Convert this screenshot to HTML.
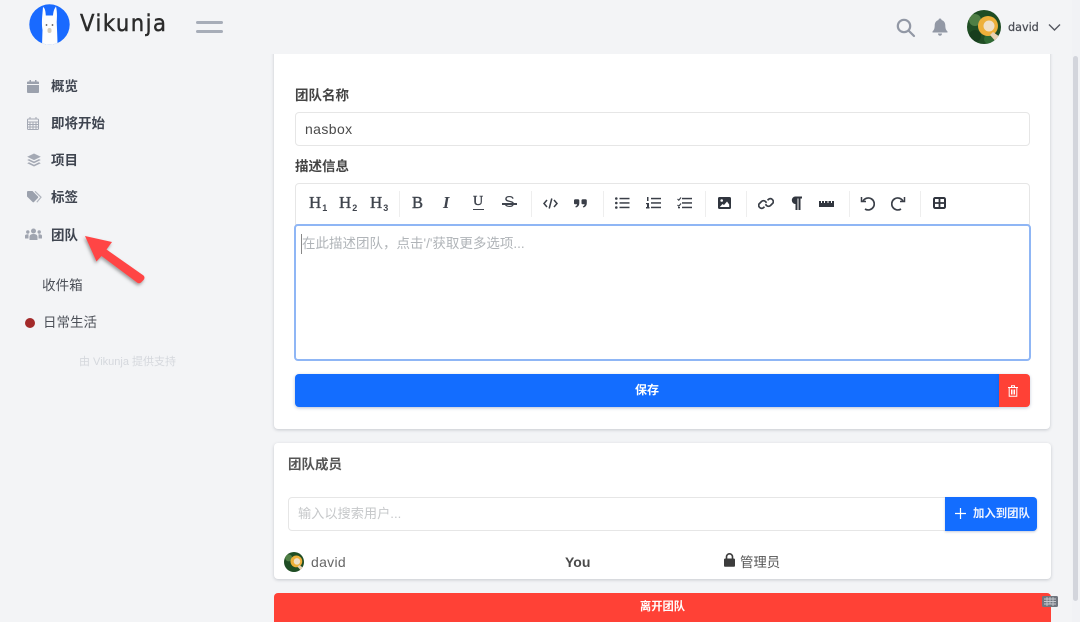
<!DOCTYPE html>
<html lang="zh"><head><meta charset="utf-8"><title>Vikunja</title>
<style>
*{box-sizing:border-box}
html,body{margin:0;padding:0;width:1080px;height:622px;overflow:hidden;background:#f3f4f6;font-family:"Liberation Sans","Noto Sans CJK SC",sans-serif;color:#4a4a4a}
#w{position:absolute;left:0;top:0;width:1080px;height:622px;overflow:hidden;filter:blur(.35px)}
.a{position:absolute;white-space:nowrap}
.card{position:absolute;background:#fff;border-radius:4px;box-shadow:0 1px 3px rgba(40,50,70,.22)}
.nav{position:absolute;left:51px;font-size:13.5px;font-weight:700;color:#3f4550;line-height:20px}
.lbl{position:absolute;left:295px;font-size:13.5px;font-weight:700;color:#444;line-height:20px}
.box{position:absolute;background:#fff;border:1px solid #e6e6e6;border-radius:4px}
.sep{position:absolute;top:191px;width:1px;height:26px;background:#eeeeee}
.h{position:absolute;top:193px;font:400 17px/20px "Liberation Serif",serif;color:#3f444d;-webkit-text-stroke:.35px #3f444d}
.h sub{font:700 9px "Liberation Sans",sans-serif;margin-left:1px;vertical-align:-3px;-webkit-text-stroke:0}
.t{position:absolute;font-family:"Liberation Serif",serif;color:#3f444d}
</style></head><body><div id="w">

<!-- sidebar icons -->
<svg class="a" style="left:27px;top:80px" width="12" height="13" viewBox="0 0 12 13" fill="#9ba1ad"><path d="M0 5H12V12a1 1 0 0 1-1 1H1a1 1 0 0 1-1-1Z M0 4V2.500a1 1 0 0 1 1-1H2.500V0H4V1.500H8V0H9.500V1.500H11a1 1 0 0 1 1 1V4Z"/></svg>
<div class="nav" style="top:77px">概览</div>
<svg class="a" style="left:27px;top:117px" width="12" height="13" viewBox="0 0 12 13" fill="none" stroke="#a4a9b4" stroke-width="1"><rect x=".5" y="2" width="11" height="10.500" rx="1"/><path d="M0 5H12M3 0V2M9 0V2M3 5V12M6 5V12M9 5V12M0 7.500H12M0 10H12"/></svg>
<div class="nav" style="top:114px">即将开始</div>
<svg class="a" style="left:27px;top:153px" width="14" height="14" viewBox="0 0 14 14" fill="#a4a9b4"><path d="M7 0.500 L13.800 3.800 L7 7.100 L0.200 3.800Z"/><path d="M2 6.100 L7 8.500 L12 6.100 L13.800 7 L7 10.300 L0.200 7Z"/><path d="M2 9.300 L7 11.700 L12 9.300 L13.800 10.200 L7 13.500 L0.200 10.200Z"/></svg>
<div class="nav" style="top:151px">项目</div>
<svg class="a" style="left:27px;top:191px" width="15" height="12" viewBox="0 0 15 12"><path d="M0 1 a1 1 0 0 1 1-1 H5.500 L11 5.500 a1 1 0 0 1 0 1.400 L7 11 a1 1 0 0 1-1.400 0 L0 5.500Z" fill="#9ba1ad"/><path d="M8 0.300 L14 6.200 L9.800 11.200" fill="none" stroke="#b0b5be" stroke-width="1.200"/></svg>
<div class="nav" style="top:188px">标签</div>
<svg class="a" style="left:25px;top:228px" width="17" height="13" viewBox="0 0 17 13" fill="#a0a5b0"><circle cx="8.500" cy="3" r="2.500"/><circle cx="2.800" cy="4" r="1.700"/><circle cx="14.200" cy="4" r="1.700"/><path d="M4.500 12 V9 C4.500 7 6 6 8.500 6 C11 6 12.500 7 12.500 9 V12Z"/><path d="M0 10.500 V8 C0 6.800 1 6.300 3.500 6.300 C3.500 7.500 3.500 9 3.500 10.500Z M17 10.500 V8 C17 6.800 16 6.300 13.500 6.300 C13.500 7.500 13.500 9 13.500 10.500Z"/></svg>
<div class="nav" style="top:226px">团队</div>

<div class="a" style="left:42px;top:276px;font-size:13.6px;line-height:20px;color:#4c5058">收件箱</div>
<div class="a" style="left:25px;top:318px;width:10px;height:10px;border-radius:50%;background:#a32a2a"></div>
<div class="a" style="left:43px;top:313px;font-size:13.5px;line-height:20px;color:#4c5058">日常生活</div>
<div class="a" style="left:79px;top:355px;font-size:11px;line-height:14px;color:#d5d8dd">由 Vikunja 提供支持</div>

<!-- red arrow -->
<svg class="a" style="left:80px;top:230px" width="75" height="65" viewBox="80 230 75 65">
<defs><filter id="sh" x="-30%" y="-30%" width="170%" height="170%"><feDropShadow dx="-1" dy="2" stdDeviation="1.500" flood-color="#555" flood-opacity=".55"/></filter></defs>
<path d="M85 236 L112 242 L106.500 249.500 L143.500 275.500 Q145.500 277.500 143.500 280 L141 282.500 Q139 284 137 282.500 L101.500 256 L96.500 261.500Z" fill="#ff4444" filter="url(#sh)"/>
</svg>

<!-- main card -->
<div class="card" style="left:274px;top:40px;width:776px;height:389px;border-radius:0 0 4px 4px"></div>
<div class="a" style="left:0;top:0;width:1072px;height:54px;background:#f3f4f6"></div>

<!-- header -->
<svg class="a" style="left:29px;top:4px" width="41" height="41" viewBox="0 0 41 41">
<defs><clipPath id="lg"><circle cx="20.500" cy="20.500" r="20.200"/></clipPath></defs>
<circle cx="20.500" cy="20.500" r="20.200" fill="#196aff"/>
<path clip-path="url(#lg)" d="M13 42 L13.500 26 C12.500 20 13 14 13.500 9 L14 3 C16 4 16.500 7 16.800 11.500 L24 11.500 C24.300 8 25 5 27 2.500 C28.300 8 28 13 27.700 18 C28 26 28.500 34 28.500 42Z" fill="#fdfdfd"/>
<circle cx="17.500" cy="21" r=".9" fill="#555"/><circle cx="23.500" cy="21" r=".9" fill="#555"/>
<rect x="18.500" y="24" width="4" height="5" rx="2" fill="#d8cdb8"/>
</svg>
<div class="a" style="left:80px;top:10px;font:400 23px/28px 'DejaVu Sans',sans-serif;letter-spacing:1.600px;color:#2b2b2b;-webkit-text-stroke:.45px #2b2b2b;transform-origin:0 50%;transform:scaleX(.92)">Vikunja</div>
<div class="a" style="left:196px;top:21px;width:27px;height:3px;background:#a7adb8;border-radius:2px"></div>
<div class="a" style="left:196px;top:30px;width:27px;height:3px;background:#a7adb8;border-radius:2px"></div>
<svg class="a" style="left:896px;top:18px" width="20" height="20" viewBox="0 0 20 20" fill="none" stroke="#9298a5" stroke-width="2.200"><circle cx="8" cy="8" r="6.200"/><path d="M12.600 12.600 L18 18" stroke-linecap="round"/></svg>
<svg class="a" style="left:932px;top:18px" width="16" height="18" viewBox="0 0 16 18" fill="#9298a5"><path d="M8 0.500 C9 0.500 9.500 1 9.500 2 C12 2.700 13.300 4.800 13.300 7.500 C13.300 10.500 14 12 15.500 13.500 L15.500 14.500 L0.500 14.500 L0.500 13.500 C2 12 2.700 10.500 2.700 7.500 C2.700 4.800 4 2.700 6.500 2 C6.500 1 7 0.500 8 0.500Z M6 15.500 L10 15.500 C10 17 9 17.800 8 17.800 C7 17.800 6 17 6 15.500Z"/></svg>
<svg class="a" style="left:967px;top:10px" width="34" height="34" viewBox="0 0 34 34">
<defs><clipPath id="c2"><circle cx="17" cy="17" r="17"/></clipPath></defs>
<g clip-path="url(#c2)"><rect width="34" height="34" fill="#1f4d24"/><circle cx="8" cy="10" r="6" fill="#4f7f45"/><circle cx="8" cy="26" r="6" fill="#173d1d"/><circle cx="22" cy="29" r="5" fill="#2f6a33"/>
<circle cx="21" cy="16" r="10" fill="#eeb03a"/><circle cx="22" cy="16" r="5.500" fill="#f0e0c8"/><path d="M26 22 L33 27 L30 33 L23 25Z" fill="#e9d2b4"/></g></svg>
<div class="a" style="left:1008px;top:20px;font:400 11.200px/16px 'DejaVu Sans',sans-serif;color:#4a4d55;-webkit-text-stroke:.25px #4a4d55">david</div>
<svg class="a" style="left:1048px;top:23px" width="13" height="9" viewBox="0 0 13 9" fill="none" stroke="#555860" stroke-width="1.400"><path d="M1 1.500 L6.500 7 L12 1.500"/></svg>

<!-- form -->
<div class="lbl" style="top:86px">团队名称</div>
<div class="box" style="left:295px;top:112px;width:735px;height:34px"></div>
<div class="a" style="left:305px;top:120px;font-size:14px;line-height:18px;color:#4a4a4a;letter-spacing:.4px">nasbox</div>
<div class="lbl" style="top:157px">描述信息</div>

<!-- toolbar -->
<div class="box" style="left:295px;top:183px;width:735px;height:42px;border-radius:4px 4px 0 0"></div>
<div class="h" style="left:309px">H<sub>1</sub></div>
<div class="h" style="left:339px">H<sub>2</sub></div>
<div class="h" style="left:370px">H<sub>3</sub></div>
<div class="sep" style="left:399px"></div>
<div class="t" style="left:412px;top:193px;font-size:16.500px;line-height:20px;-webkit-text-stroke:.4px #3f444d">B</div>
<div class="t" style="left:443px;top:193px;font-size:16.500px;line-height:20px;font-style:italic;font-weight:700">I</div>
<div class="t" style="left:473px;top:195px;font-size:14px;line-height:14px;-webkit-text-stroke:.4px #3f444d;border-bottom:1.500px solid #3f444d;padding:0 1px 0 0">U</div>
<div class="t" style="left:504px;top:193px;font:400 16px/20px 'Liberation Sans',sans-serif;color:#3f444d">S</div>
<div class="a" style="left:502px;top:203px;width:15px;height:1.500px;background:#3f444d"></div>
<div class="sep" style="left:531px"></div>
<svg class="a" style="left:543px;top:198px" width="15" height="11" viewBox="0 0 15 11" fill="none" stroke="#3a3f48" stroke-width="1.500"><path d="M4 2 L1 5.500 L4 9 M11 2 L14 5.500 L11 9 M8.800 .5 L6.200 10.500"/></svg>
<svg class="a" style="left:574px;top:199px" width="13" height="9" viewBox="0 0 13 9" fill="#3a3f48"><path d="M0 1.500a1.300 1.300 0 0 1 1.300-1.300h2.700a1.300 1.300 0 0 1 1.300 1.300v2.500c0 2.500-1.300 4-3.500 4.500l-.5-1c1.200-.5 1.800-1.300 1.800-2.200H1.300A1.300 1.300 0 0 1 0 4.500Z"/><path d="M7.500 1.500a1.300 1.300 0 0 1 1.300-1.300h2.700a1.300 1.300 0 0 1 1.300 1.300v2.500c0 2.500-1.300 4-3.500 4.500l-.5-1c1.200-.5 1.800-1.300 1.800-2.200H8.800A1.300 1.300 0 0 1 7.500 4.500Z"/></svg>
<div class="sep" style="left:603px"></div>
<svg class="a" style="left:615px;top:197px" width="15" height="12" viewBox="0 0 15 12" fill="#3a3f48"><circle cx="1.300" cy="1.500" r="1.300"/><circle cx="1.300" cy="6" r="1.300"/><circle cx="1.300" cy="10.500" r="1.300"/><rect x="4.500" y=".8" width="10" height="1.500"/><rect x="4.500" y="5.200" width="10" height="1.500"/><rect x="4.500" y="9.700" width="10" height="1.500"/></svg>
<svg class="a" style="left:646px;top:197px" width="15" height="12" viewBox="0 0 15 12" fill="#3a3f48"><rect x="1" y="0" width="1.500" height="4"/><rect x="0" y="6" width="3" height="1.200"/><rect x="0" y="10" width="3.500" height="1.500"/><rect x="1" y="7" width="2" height="3"/><rect x="5" y=".8" width="10" height="1.500"/><rect x="5" y="5.200" width="10" height="1.500"/><rect x="5" y="9.700" width="10" height="1.500"/></svg>
<svg class="a" style="left:677px;top:197px" width="15" height="12" viewBox="0 0 15 12"><path d="M.5 2 L1.800 3.200 L4 .5 M.5 8 L1.800 9.200 L4 6.500" fill="none" stroke="#3a3f48" stroke-width="1.100"/><rect x="5" y=".8" width="10" height="1.500" fill="#3a3f48"/><rect x="5" y="5.200" width="10" height="1.500" fill="#3a3f48"/><rect x="1" y="10" width="2" height="1.300" fill="#3a3f48"/><rect x="5" y="9.700" width="10" height="1.500" fill="#3a3f48"/></svg>
<div class="sep" style="left:705px"></div>
<svg class="a" style="left:718px;top:197px" width="13" height="12" viewBox="0 0 13 12"><rect width="13" height="12" rx="1.500" fill="#30353e"/><circle cx="3.700" cy="3.500" r="1.300" fill="#fff"/><path d="M1.800 10 L4.500 7 L6 8 L9 4.500 L11.200 7.500 V10Z" fill="#fff"/></svg>
<div class="sep" style="left:746px"></div>
<svg class="a" style="left:758px;top:197px" width="16" height="13" viewBox="0 0 16 13" fill="none" stroke="#3a3f48" stroke-width="1.700"><path d="M6.500 9.800 L5 11 a3 3 0 0 1-4-4 L3.500 4.500 a3 3 0 0 1 4 0 L8.500 5.800"/><path d="M9.500 3.200 L11 2 a3 3 0 0 1 4 4 L12.500 8.500 a3 3 0 0 1-4 0 L7.500 7.200"/></svg>
<svg class="a" style="left:790px;top:196px" width="12" height="14" viewBox="0 0 12 14" fill="#30353e"><path d="M5 0.500 H12 V2.500 H10.500 V14 H8.500 V2.500 H7.500 V14 H5.500 V8 H5 A3.800 3.800 0 0 1 5 .5Z"/></svg>
<svg class="a" style="left:819px;top:199px" width="15" height="8" viewBox="0 0 15 8" fill="#30353e"><path d="M0 2 H2 V4 H3 V2 H5 V4 H6 V2 H8.500 V4 H9.500 V2 H12 V4 H13 V2 H15 V8 H0Z"/></svg>
<div class="sep" style="left:849px"></div>
<svg class="a" style="left:860px;top:196px" width="15" height="15" viewBox="0 0 15 15" fill="none" stroke="#3a3f48" stroke-width="1.700"><path d="M3 5 A6 6 0 1 1 5 13"/><path d="M1.500 1 V5.500 H6" stroke-width="1.500"/></svg>
<svg class="a" style="left:891px;top:196px" width="15" height="15" viewBox="0 0 15 15" fill="none" stroke="#3a3f48" stroke-width="1.700"><path d="M12 5 A6 6 0 1 0 10 13"/><path d="M13.500 1 V5.500 H9" stroke-width="1.500"/></svg>
<div class="sep" style="left:920px"></div>
<svg class="a" style="left:933px;top:197px" width="13" height="12" viewBox="0 0 13 12"><rect x="1" y="1" width="11" height="10" rx="1.200" fill="#fff" stroke="#30353e" stroke-width="2"/><path d="M0 6 H13 M6.500 1 V11" stroke="#30353e" stroke-width="1.800"/></svg>

<!-- editor -->
<div class="a" style="left:294px;top:224px;width:737px;height:137px;border:2px solid #8fb6f5;border-radius:4px;background:#fff"></div>
<div class="a" style="left:301px;top:234px;width:1px;height:20px;background:#888"></div>
<div class="a" style="left:302px;top:235px;font-size:13.500px;line-height:18px;color:#b0b4b8">在此描述团队，点击'/'获取更多选项...</div>

<!-- save -->
<div class="a" style="left:295px;top:374px;width:704px;height:33px;background:#136dff;border-radius:4px 0 0 4px;box-shadow:0 1px 3px rgba(20,50,110,.3);color:#fff;font-size:12px;font-weight:700;line-height:33px;text-align:center">保存</div>
<div class="a" style="left:999px;top:374px;width:31px;height:33px;background:#ff4136;border-radius:0 4px 4px 0;box-shadow:0 1px 3px rgba(20,50,110,.25)"></div>
<svg class="a" style="left:1008px;top:385px" width="10" height="12" viewBox="0 0 10 12" fill="none" stroke="#fff" stroke-width="1"><path d="M0 2.500 H10 M3.500 2.500 V.7 H6.500 V2.500 M1.200 2.500 V11.300 H8.800 V2.500 M3.500 4.500 V9.500 M5 4.500 V9.500 M6.500 4.500 V9.500"/></svg>

<!-- members card -->
<div class="card" style="left:274px;top:443px;width:777px;height:136px"></div>
<div class="a" style="left:288px;top:455px;font-size:13.500px;font-weight:700;line-height:20px;color:#555">团队成员</div>
<div class="box" style="left:288px;top:497px;width:658px;height:34px;border-radius:4px 0 0 4px"></div>
<div class="a" style="left:298px;top:505px;font-size:13.200px;line-height:18px;color:#c6c8ca">输入以搜索用户...</div>
<div class="a" style="left:945px;top:497px;width:92px;height:34px;background:#136dff;border-radius:0 4px 4px 0;box-shadow:0 1px 2px rgba(20,50,110,.25)"></div>
<svg class="a" style="left:955px;top:508px" width="11" height="11" viewBox="0 0 11 11" stroke="#fff" stroke-width="1.200"><path d="M5.500 0 V11 M0 5.500 H11"/></svg>
<div class="a" style="left:973px;top:507px;font-size:11.400px;font-weight:700;line-height:14px;color:#eef3ff">加入到团队</div>

<svg class="a" style="left:284px;top:552px" width="20" height="20" viewBox="0 0 34 34"><defs><clipPath id="c3"><circle cx="17" cy="17" r="17"/></clipPath></defs><g clip-path="url(#c3)"><rect width="34" height="34" fill="#1f4d24"/><circle cx="8" cy="10" r="6" fill="#4f7f45"/><circle cx="21" cy="16" r="10" fill="#eeb03a"/><circle cx="22" cy="16" r="5.500" fill="#f0e0c8"/><path d="M26 22 L33 27 L30 33 L23 25Z" fill="#e9d2b4"/></g></svg>
<div class="a" style="left:311px;top:553px;font-size:14px;line-height:18px;color:#666;letter-spacing:.3px">david</div>
<div class="a" style="left:565px;top:553px;font-size:14px;font-weight:700;line-height:18px;color:#4a4a4a">You</div>
<svg class="a" style="left:724px;top:553px" width="11" height="14" viewBox="0 0 11 14"><path d="M2.500 6 V3.800 a3 3 0 0 1 6 0 V6" fill="none" stroke="#3c3c3c" stroke-width="1.600"/><rect y="5.500" width="11" height="8.300" rx="1.300" fill="#3c3c3c"/></svg>
<div class="a" style="left:740px;top:553px;font-size:13.400px;line-height:19px;color:#555">管理员</div>

<!-- leave -->
<div class="a" style="left:274px;top:593px;width:777px;height:29px;background:#ff4136;border-radius:4px 4px 0 0;color:#fff;font-size:11.300px;font-weight:700;line-height:29px;text-align:center">离开团队</div>
<svg class="a" style="left:1042px;top:596px" width="16" height="11" viewBox="0 0 16 11"><rect width="16" height="11" rx="1.500" fill="#70767f"/><path d="M2 3 H14 M2 5.500 H14 M2 8 H14 M5 1 V10 M8 1 V8 M11 1 V10" stroke="#c6c9cf" stroke-width=".9"/></svg>

<!-- scrollbar -->
<div class="a" style="left:1072px;top:0;width:8px;height:622px;background:#f1f2f5"></div>
<div class="a" style="left:1073px;top:56px;width:5px;height:545px;background:#d3d5dc;border-radius:3px"></div>
</div></body></html>
